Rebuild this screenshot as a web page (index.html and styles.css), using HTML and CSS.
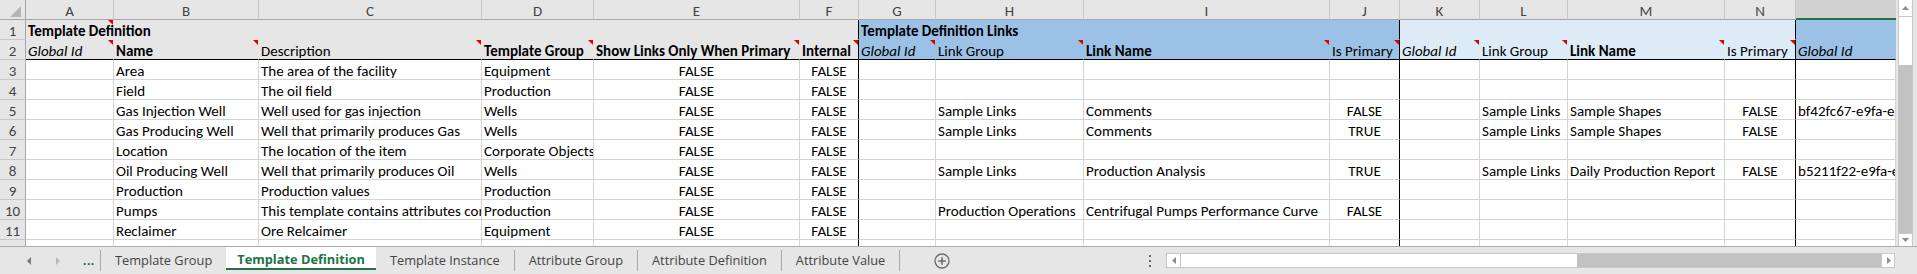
FILE: index.html
```html
<!DOCTYPE html>
<html>
<head>
<meta charset="utf-8">
<link rel="stylesheet" href="styles.css">
</head>
<body>
<div class="app">
  <div class="sheet">
    <div class="grid">
      <!-- column headers -->
      <div class="ch corner"><svg width="26" height="20"><polygon points="21,6 21,17 10,17" fill="#b4b4b4"/></svg></div>
      <div class="ch">A</div><div class="ch">B</div><div class="ch">C</div><div class="ch">D</div><div class="ch">E</div><div class="ch">F</div><div class="ch">G</div><div class="ch">H</div><div class="ch">I</div><div class="ch">J</div><div class="ch">K</div><div class="ch">L</div><div class="ch">M</div><div class="ch">N</div><div class="ch sel"></div>

      <!-- row 1 -->
      <div class="rh">1</div>
      <div class="c gr r1 bold ov tri">Template Definition</div>
      <div class="c gr r1"></div><div class="c gr r1"></div><div class="c gr r1"></div><div class="c gr r1"></div><div class="c gr r1 bk"></div>
      <div class="c bl r1 bold ov">Template Definition Links</div>
      <div class="c bl r1"></div><div class="c bl r1"></div><div class="c bl r1 bk"></div>
      <div class="c lb r1"></div><div class="c lb r1"></div><div class="c lb r1"></div><div class="c lb r1 bk"></div>
      <div class="c bl r1"></div>

      <!-- row 2 -->
      <div class="rh">2</div>
      <div class="c gr r2 ital tri">Global Id</div>
      <div class="c gr r2 bold tri">Name</div>
      <div class="c gr r2 tri">Description</div>
      <div class="c gr r2 bold tri">Template Group</div>
      <div class="c gr r2 bold tri">Show Links Only When Primary</div>
      <div class="c gr r2 bold tri bk">Internal</div>
      <div class="c bl r2 ital tri">Global Id</div>
      <div class="c bl r2 tri">Link Group</div>
      <div class="c bl r2 bold tri">Link Name</div>
      <div class="c bl r2 tri bk">Is Primary</div>
      <div class="c lb r2 ital tri">Global Id</div>
      <div class="c lb r2 tri">Link Group</div>
      <div class="c lb r2 bold tri">Link Name</div>
      <div class="c lb r2 tri bk">Is Primary</div>
      <div class="c bl r2 ital">Global Id</div>

      <!-- row 3 -->
      <div class="rh">3</div>
      <div class="c"></div><div class="c">Area</div><div class="c">The area of the facility</div><div class="c">Equipment</div><div class="c ctr">FALSE</div><div class="c ctr bk">FALSE</div>
      <div class="c"></div><div class="c"></div><div class="c"></div><div class="c ctr bk"></div>
      <div class="c"></div><div class="c"></div><div class="c"></div><div class="c ctr bk"></div><div class="c"></div>

      <!-- row 4 -->
      <div class="rh">4</div>
      <div class="c"></div><div class="c">Field</div><div class="c">The oil field</div><div class="c">Production</div><div class="c ctr">FALSE</div><div class="c ctr bk">FALSE</div>
      <div class="c"></div><div class="c"></div><div class="c"></div><div class="c ctr bk"></div>
      <div class="c"></div><div class="c"></div><div class="c"></div><div class="c ctr bk"></div><div class="c"></div>

      <!-- row 5 -->
      <div class="rh">5</div>
      <div class="c"></div><div class="c">Gas Injection Well</div><div class="c">Well used for gas injection</div><div class="c">Wells</div><div class="c ctr">FALSE</div><div class="c ctr bk">FALSE</div>
      <div class="c"></div><div class="c">Sample Links</div><div class="c">Comments</div><div class="c ctr bk">FALSE</div>
      <div class="c"></div><div class="c">Sample Links</div><div class="c">Sample Shapes</div><div class="c ctr bk">FALSE</div><div class="c">bf42fc67-e9fa-e3f1-0d71-3c4ef0a05b9a</div>

      <!-- row 6 -->
      <div class="rh">6</div>
      <div class="c"></div><div class="c">Gas Producing Well</div><div class="c">Well that primarily produces Gas</div><div class="c">Wells</div><div class="c ctr">FALSE</div><div class="c ctr bk">FALSE</div>
      <div class="c"></div><div class="c">Sample Links</div><div class="c">Comments</div><div class="c ctr bk">TRUE</div>
      <div class="c"></div><div class="c">Sample Links</div><div class="c">Sample Shapes</div><div class="c ctr bk">FALSE</div><div class="c"></div>

      <!-- row 7 -->
      <div class="rh">7</div>
      <div class="c"></div><div class="c">Location</div><div class="c">The location of the item</div><div class="c">Corporate Objects</div><div class="c ctr">FALSE</div><div class="c ctr bk">FALSE</div>
      <div class="c"></div><div class="c"></div><div class="c"></div><div class="c ctr bk"></div>
      <div class="c"></div><div class="c"></div><div class="c"></div><div class="c ctr bk"></div><div class="c"></div>

      <!-- row 8 -->
      <div class="rh">8</div>
      <div class="c"></div><div class="c">Oil Producing Well</div><div class="c">Well that primarily produces Oil</div><div class="c">Wells</div><div class="c ctr">FALSE</div><div class="c ctr bk">FALSE</div>
      <div class="c"></div><div class="c">Sample Links</div><div class="c">Production Analysis</div><div class="c ctr bk">TRUE</div>
      <div class="c"></div><div class="c">Sample Links</div><div class="c">Daily Production Report</div><div class="c ctr bk">FALSE</div><div class="c">b5211f22-e9fa-e3f1-0d71-3c4ef0a05b9a</div>

      <!-- row 9 -->
      <div class="rh">9</div>
      <div class="c"></div><div class="c">Production</div><div class="c">Production values</div><div class="c">Production</div><div class="c ctr">FALSE</div><div class="c ctr bk">FALSE</div>
      <div class="c"></div><div class="c"></div><div class="c"></div><div class="c ctr bk"></div>
      <div class="c"></div><div class="c"></div><div class="c"></div><div class="c ctr bk"></div><div class="c"></div>

      <!-- row 10 -->
      <div class="rh">10</div>
      <div class="c"></div><div class="c">Pumps</div><div class="c">This template contains attributes common to pumps</div><div class="c">Production</div><div class="c ctr">FALSE</div><div class="c ctr bk">FALSE</div>
      <div class="c"></div><div class="c">Production Operations</div><div class="c">Centrifugal Pumps Performance Curve</div><div class="c ctr bk">FALSE</div>
      <div class="c"></div><div class="c"></div><div class="c"></div><div class="c ctr bk"></div><div class="c"></div>

      <!-- row 11 -->
      <div class="rh">11</div>
      <div class="c"></div><div class="c">Reclaimer</div><div class="c">Ore Relcaimer</div><div class="c">Equipment</div><div class="c ctr">FALSE</div><div class="c ctr bk">FALSE</div>
      <div class="c"></div><div class="c"></div><div class="c"></div><div class="c ctr bk"></div>
      <div class="c"></div><div class="c"></div><div class="c"></div><div class="c ctr bk"></div><div class="c"></div>

      <!-- row 12 -->
      <div class="rh">12</div>
      <div class="c"></div><div class="c"></div><div class="c">The template for the stockpile</div><div class="c">Equipment</div><div class="c ctr"></div><div class="c ctr bk"></div>
      <div class="c"></div><div class="c"></div><div class="c"></div><div class="c ctr bk"></div>
      <div class="c"></div><div class="c"></div><div class="c"></div><div class="c ctr bk"></div><div class="c"></div>
    </div>
    <div class="vscroll">
      <div class="vbar">
        <div class="vbtn"><svg width="13" height="16"><polygon points="3,10 10,10 6.5,6" fill="#8c8c8c"/></svg></div>
        <div class="vthumb"></div>
        <div class="vtrack"></div>
        <div class="vbtn down"><svg width="13" height="12"><polygon points="3,4 10,4 6.5,8" fill="#8c8c8c"/></svg></div>
      </div>
    </div>
  </div>
  <div class="tabbar">
    <div class="nav">
      <span class="arr"><svg width="8" height="10"><polygon points="6,1 6,9 2,5" fill="#7a7a7a"/></svg></span>
      <span class="arr"><svg width="8" height="10"><polygon points="2,1 2,9 6,5" fill="#b8b8b8"/></svg></span>
      <span class="more">...</span>
    </div>
    <div class="tab">Template Group</div>
    <div class="tab active">Template Definition</div>
    <div class="tab">Template Instance</div>
    <div class="tab">Attribute Group</div>
    <div class="tab">Attribute Definition</div>
    <div class="tab">Attribute Value</div>
    <div class="tab last"></div>
    <div class="add"><svg width="18" height="18"><circle cx="9" cy="9" r="7" fill="none" stroke="#6b6b6b" stroke-width="1.3"/><path d="M9 5.2V12.8M5.2 9H12.8" stroke="#6b6b6b" stroke-width="1.5"/></svg></div>
    <div class="spacer"></div>
    <div class="dots"><i></i><i></i><i></i></div>
    <div class="hscroll">
      <div class="hbtn"><svg width="14" height="13"><polygon points="9,3 9,10 5,6.5" fill="#8c8c8c"/></svg></div>
      <div class="hthumb"></div>
      <div class="htrack"></div>
      <div class="hbtn"><svg width="13" height="13"><polygon points="5,3 5,10 9,6.5" fill="#8c8c8c"/></svg></div>
    </div>
  </div>
</div>
</body>
</html>
```

FILE: styles.css
```css
* { box-sizing: border-box; margin: 0; padding: 0; }
html, body { width: 1917px; height: 274px; overflow: hidden; background: #fff; }
body { font-family: Carlito, Lato, "Liberation Sans", sans-serif; font-size: 15px; color: #000; }

.app { display: flex; flex-direction: column; width: 1917px; height: 274px; }
.sheet { display: flex; height: 246px; overflow: hidden; flex: none; }

.grid {
  display: grid;
  grid-template-columns: 26px 88px 145px 223px 112px 206px 59px 77px 148px 246px 70px 80px 88px 157px 71px 100px;
  grid-auto-rows: 20px;
  width: 1896px;
  flex: none;
  align-content: start;
}

.c {
  border-right: 1px solid #d4d4d4;
  border-bottom: 1px solid #d4d4d4;
  padding: 0 2px;
  white-space: nowrap;
  overflow: hidden;
  line-height: 23px;
  position: relative;
}
.ctr { text-align: center; }
.bold { font-weight: bold; }
.ital { font-style: italic; }
.ov { overflow: visible; z-index: 1; }

.gr { background: #e7e6e6; border-color: #e7e6e6; }
.bl { background: #9bc2e6; border-color: #9bc2e6; }
.lb { background: #ddebf7; border-color: #ddebf7; }
.r2 { border-bottom-color: #000; }
.c.bk { border-right-color: #000; }

.tri::after {
  content: "";
  position: absolute;
  top: 0;
  right: 0;
  border-style: solid;
  border-width: 0 5px 5px 0;
  border-color: transparent #e00000 transparent transparent;
}

.ch {
  background: #e6e6e6;
  border-right: 1px solid #c8c8c8;
  border-bottom: 1px solid #a6a6a6;
  color: #444;
  text-align: center;
  line-height: 23px;
  overflow: hidden;
}
.ch.corner { border-right-color: #a6a6a6; }
.ch.sel { background: #d2d2d2; border-bottom: 2px solid #217346; border-right: none; }

.rh {
  background: #e6e6e6;
  border-right: 1px solid #a6a6a6;
  border-bottom: 1px solid #c8c8c8;
  color: #444;
  text-align: center;
  line-height: 23px;
  overflow: hidden;
}

.vscroll { width: 21px; flex: none; background: #e6e6e6; padding: 0 4px 0 2px; }
.vbar { height: 246px; display: flex; flex-direction: column; border-left: 1px solid #c8c8c8; border-right: 1px solid #c8c8c8; }
.vbtn { height: 17px; background: #fff; border-bottom: 1px solid #c8c8c8; display: flex; align-items: center; justify-content: center; }
.vbtn.down { height: 13px; border-bottom: none; border-top: 1px solid #c8c8c8; }
.vthumb { height: 48px; background: #fff; }
.vtrack { flex: 1; background: #c2c2c2; }

.tabbar {
  flex: none;
  height: 28px;
  display: flex;
  align-items: stretch;
  background: #e6e6e6;
  border-top: 1px solid #ababab;
  font-family: "Open Sans", "Noto Sans", sans-serif;
  font-size: 12.8px;
  color: #444;
}
.nav { width: 100px; display: flex; align-items: center; padding-left: 25px; flex: none; }
.arr { width: 29px; display: flex; align-items: center; }
.more { color: #2f5d3e; font-weight: bold; font-size: 12px; letter-spacing: 0.5px; }
.tab {
  display: flex;
  align-items: center;
  justify-content: center;
  padding: 0 14px 1px;
  border-left: 1px solid #a8a8a8;
  margin: 3px 0;
}
.tab.active {
  background: #fff;
  color: #217346;
  font-weight: bold;
  border-left: none;
  border-bottom: 2px solid #217346;
  margin: 0 0 4px;
  padding: 3px 11px 0;
}
.tab.active + .tab { border-left: none; }
.tab.last { padding: 0; }
.add { width: 84px; display: flex; align-items: center; justify-content: center; flex: none; }
.spacer { flex: 1; }
.dots { width: 16px; display: flex; flex-direction: column; justify-content: center; align-items: center; gap: 3px; flex: none; margin-right: 8px; }
.dots i { width: 2px; height: 2px; background: #666; display: block; }
.hscroll {
  width: 729px;
  flex: none;
  margin: 6px 22px 6px 0;
  display: flex;
  border: 1px solid #c8c8c8;
}
.hbtn { width: 14px; background: #fff; display: flex; align-items: center; justify-content: center; border-right: 1px solid #c8c8c8; }
.hbtn:last-child { border-right: none; border-left: 1px solid #c8c8c8; width: 13px; }
.hthumb { width: 396px; background: #fff; }
.htrack { flex: 1; background: #c2c2c2; }
```
